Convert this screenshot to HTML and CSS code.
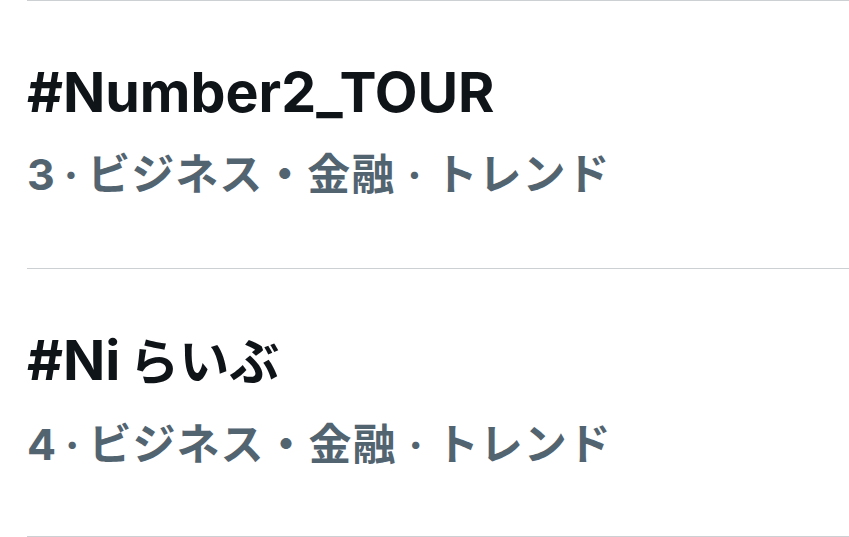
FILE: index.html
```html
<!DOCTYPE html>
<html lang="ja">
<head>
    <meta charset="UTF-8">
    <meta name="viewport" content="width=device-width, initial-scale=1.0">
    <title>Trends</title>
    <link rel="stylesheet" href="styles.css">
</head>
<body>
    <!-- Trend list -->
    <div class="trend-list">
        <div class="trend-item">
            <div class="trend-name">#Number2_TOUR</div>
            <div class="trend-meta">3<span class="sep">·</span>ビジネス・金融<span class="sep sep-wide">·</span>トレンド</div>
        </div>
        <div class="trend-item">
            <div class="trend-name">#Ni<span class="kana">らいぶ</span></div>
            <div class="trend-meta">4<span class="sep">·</span>ビジネス・金融<span class="sep sep-wide">·</span>トレンド</div>
        </div>
    </div>
</body>
</html>
```

FILE: styles.css
```css
body {
    margin: 0;
    background-color: #ffffff;
    font-family: Inter, "Noto Sans CJK JP", sans-serif;
}
.trend-list {
    margin-left: 27px;
    border-top: 1px solid #cdd0d3;
}
.trend-item {
    height: 268px;
    box-sizing: border-box;
    padding-top: 58px;
    border-bottom: 1px solid #cdd0d3;
}
.trend-name {
    font-size: 55.5px;
    font-weight: 700;
    line-height: 66px;
    color: #0f1419;
}
.trend-name .kana {
    margin-left: 9px;
    font-size: 50px;
}
.trend-meta {
    margin-top: 24px;
    font-size: 43px;
    font-weight: 700;
    line-height: 50px;
    letter-spacing: 1px;
    color: #536471;
}
.sep {
    margin: 0 8px;
}
.sep-wide {
    margin: 0 12px;
}
```
